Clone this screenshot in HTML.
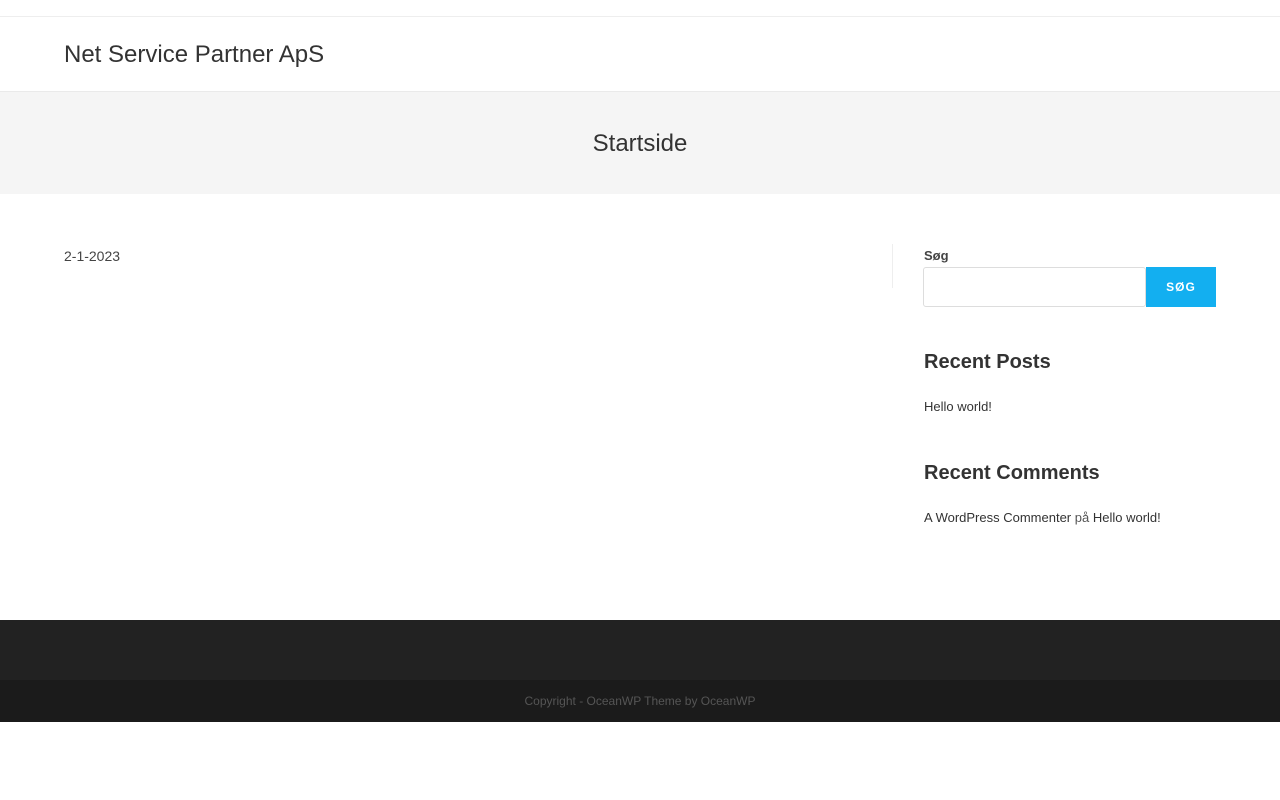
<!DOCTYPE html>
<html><head><meta charset="utf-8"><style>
*{box-sizing:border-box;margin:0;padding:0}
body{width:1280px;height:800px;background:#fff;font-family:"Liberation Sans",sans-serif;color:#333;position:relative;overflow:hidden}
.abs{position:absolute}
</style></head><body>
<div class="abs" style="top:16px;left:0;width:1280px;height:1px;background:#eee"></div>
<div class="abs" style="top:41px;left:64px;font-size:24px;color:#333">Net Service Partner ApS</div>
<div class="abs" style="top:91px;left:0;width:1280px;height:103px;background:#f5f5f5;border-top:1px solid #eaeaea"></div>
<div class="abs" style="top:130px;left:0;width:1280px;text-align:center;font-size:24px;color:#333">Startside</div>
<div class="abs" style="top:248px;left:64px;font-size:14px;color:#444">2-1-2023</div>
<div class="abs" style="top:244px;left:892px;width:1px;height:44px;background:#eee"></div>
<div class="abs" style="top:248px;left:924px;font-size:13px;font-weight:bold;color:#444">Søg</div>
<div class="abs" style="top:267px;left:923px;width:223px;height:40px;border:1px solid #ddd;border-radius:3px"></div>
<div class="abs" style="top:267px;left:1146px;width:70px;height:40px;background:#13aff0;color:#fff;font-size:12px;font-weight:bold;letter-spacing:1px;text-align:center;line-height:40px">SØG</div>
<div class="abs" style="top:351px;left:924px;font-size:20px;font-weight:bold;color:#333">Recent Posts</div>
<div class="abs" style="top:399px;left:924px;font-size:13px;color:#333">Hello world!</div>
<div class="abs" style="top:462px;left:924px;font-size:20px;font-weight:bold;color:#333">Recent Comments</div>
<div class="abs" style="top:510px;left:924px;font-size:13px;color:#333">A WordPress Commenter <span style="color:#555">på</span> Hello world!</div>
<div class="abs" style="top:620px;left:0;width:1280px;height:60px;background:#222"></div>
<div class="abs" style="top:680px;left:0;width:1280px;height:42px;background:#1b1b1b;text-align:center;line-height:42px;font-size:12px;color:#555">Copyright - OceanWP Theme by OceanWP</div>
</body></html>
